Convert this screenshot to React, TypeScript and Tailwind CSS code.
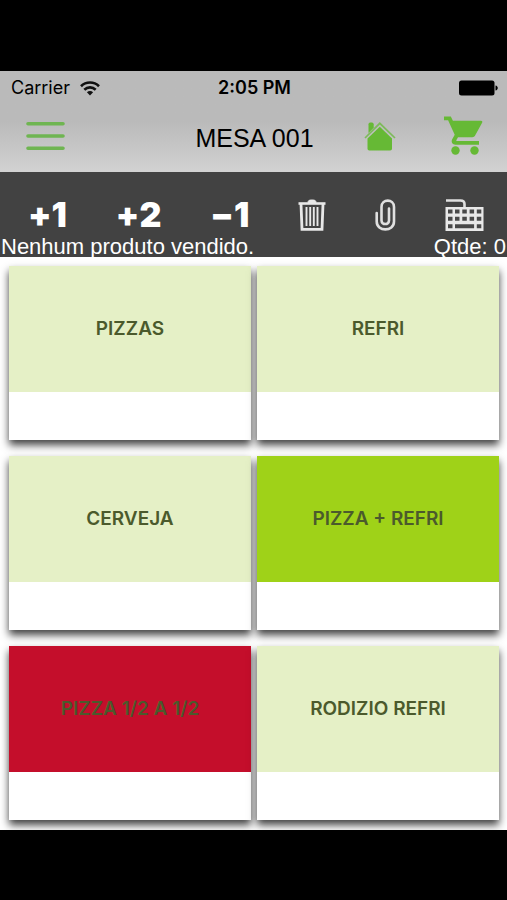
interface Category {
  name: string;
  color: string;
}

const categories: Category[] = [
  { name: "PIZZAS", color: "bg-[#e5f0c6]" },
  { name: "REFRI", color: "bg-[#e5f0c6]" },
  { name: "CERVEJA", color: "bg-[#e5f0c6]" },
  { name: "PIZZA + REFRI", color: "bg-[#9fd218]" },
  { name: "PIZZA 1/2 A 1/2", color: "bg-[#c40e2b]" },
  { name: "RODIZIO REFRI", color: "bg-[#e5f0c6]" },
];

function WifiIcon() {
  return (
    <svg width="20" height="15" viewBox="0 0 20 15" fill="none" stroke="#111" strokeWidth="2.6">
      <path d="M1 5.2C6 0.3 14 0.3 19 5.2" />
      <path d="M4.3 8.7c3.3-3.1 8.1-3.1 11.4 0" />
      <path d="M6.9 11.3c1.8-1.7 4.4-1.7 6.2 0L10 14.6z" fill="#111" stroke="none" />
    </svg>
  );
}

function BatteryIcon() {
  return (
    <svg width="39" height="16" viewBox="0 0 39 16" fill="#000">
      <rect x="0" y="0.5" width="35.5" height="15" rx="2.5" />
      <path d="M36.5 5.5c3 0.5 3 4.5 0 5z" />
    </svg>
  );
}

function MenuIcon() {
  return (
    <svg width="39" height="30" viewBox="0 0 39 30" stroke="#6fb551" strokeWidth="3.6" strokeLinecap="round">
      <path d="M2 2.7h35M2 15h35M2 27.3h35" />
    </svg>
  );
}

function HomeIcon() {
  return (
    <svg width="32" height="30" viewBox="0 0 32 30" fill="#66b935">
      <path d="M4.5 12V3.2C4.5 2 5.3 1.5 7 1.5s2.7 0.5 2.7 1.7v3.6z" />
      <path d="M1 17L15.8 2.3 31 17" fill="none" stroke="#7dbb5a" strokeWidth="1.7" />
      <path d="M3.5 17.5L15.8 5.8 28 17.5V27.5c0 1.2-0.7 1.9-1.9 1.9H5.4c-1.2 0-1.9-0.7-1.9-1.9z" />
    </svg>
  );
}

function CartIcon() {
  return (
    <svg width="39" height="39" viewBox="0 0 39 39" fill="#66b935">
      <path d="M0 0.5h6.8l2.1 4.3H37c1.1 0 1.7 0.9 1.1 2l-7 12.7c-0.6 1.1-1.5 1.7-2.8 1.7H14l-1.7 3c-0.2 0.5 0 0.8 0.5 0.8H35v3.8H11.5c-3 0-4.7-2.9-3.3-5.5l2.5-4.6L4.1 4.3H0z" />
      <circle cx="11.5" cy="34.5" r="4.2" />
      <circle cx="30.5" cy="34.5" r="4.2" />
    </svg>
  );
}

function TrashIcon() {
  return (
    <svg width="28" height="32" viewBox="0 0 28 32" fill="none" stroke="#e8e8e8">
      <path d="M0.5 4.5h27" strokeWidth="2.6" />
      <path d="M10 3.5c0-2 1-2.5 4-2.5s4 0.5 4 2.5z" fill="#e8e8e8" />
      <path d="M3 5l1 25.3h20L25 5" strokeWidth="2.8" />
      <path d="M8.5 8v19M12.2 8v19M15.8 8v19M19.5 8v19" strokeWidth="1.9" />
    </svg>
  );
}

function ClipIcon() {
  return (
    <svg width="21" height="32" viewBox="0 0 21 32" fill="none" stroke="#e0e0e0" strokeWidth="2.6" strokeLinecap="round">
      <path d="M1.7 14v8.5c0 10.5 17.3 10.5 17.3 0V8c0-8.500-12.500-8.500-12.500 0v13.500c0 4.700 7.500 4.700 7.500 0V9.500" />
    </svg>
  );
}

function KeyboardIcon() {
  return (
    <svg width="39" height="32" viewBox="0 0 39 32">
      <path d="M1 1.5h14.5c2.5 0 4 1.2 4 3.5v4" fill="none" stroke="#e0e0e0" strokeWidth="2.6" />
      <path d="M0.5 8h38v24h-38z" fill="#e8e8e8" />
      <path
        d="M3 10.5h4.5v4H3zM10 10.5h4.5v4H10zM17.3 10.5h4.5v4h-4.5zM24.6 10.5h4.5v4h-4.5zM31.8 10.5h4.5v4h-4.5zM3 17.8h4.5v4H3zM10 17.8h4.5v4H10zM17.3 17.8h4.5v4h-4.5zM24.6 17.8h4.5v4h-4.5zM31.8 17.8h4.5v4h-4.5zM3 25.3h4.5v4H3zM10 25.3h19.1v4H10zM31.8 25.3h4.5v4h-4.5z"
        fill="#484848"
      />
    </svg>
  );
}

function QuantityButton({ sign, amount }: { sign: string; amount: number }) {
  return (
    <button
      type="button"
      className="flex items-center font-[Inter,sans-serif] text-[34px] leading-none font-black"
    >
      <span>{sign}</span>
      <span>{amount}</span>
    </button>
  );
}

function CategoryCard({ name, color }: Category) {
  return (
    <button
      type="button"
      className="flex flex-col bg-white shadow-[0_5px_8px_rgba(0,0,0,0.75)]"
    >
      <span
        className={`flex h-[126px] w-full items-center justify-center text-[19px] font-semibold text-[#4b5a2c] ${color}`}
      >
        {name}
      </span>
      <span className="h-12" />
    </button>
  );
}

export default function App() {
  return (
    <div className="min-h-screen bg-black pt-[71px] font-[Inter,sans-serif]">
      <header className="bg-linear-to-b from-[#bababa] from-50% to-[#d2d2d2] text-black">
        <div className="grid h-[34px] grid-cols-[1fr_auto_1fr] items-center pr-[9px] pl-[11px] text-lg">
          <div className="flex items-center gap-2.5">
            <span>Carrier</span>
            <WifiIcon />
          </div>
          <span className="font-semibold">2:05 PM</span>
          <div className="flex justify-end">
            <BatteryIcon />
          </div>
        </div>
        <div className="grid h-[67px] grid-cols-[1fr_auto_1fr] items-center pr-6 pl-[26px]">
          <button type="button" aria-label="Menu" className="justify-self-start pb-1.5">
            <MenuIcon />
          </button>
          <h1 className="font-['Liberation_Sans',sans-serif] text-[25px]">MESA 001</h1>
          <div className="flex items-center justify-end gap-12 pb-1.5">
            <button type="button" aria-label="Início">
              <HomeIcon />
            </button>
            <button type="button" aria-label="Carrinho">
              <CartIcon />
            </button>
          </div>
        </div>
      </header>

      <section className="bg-[#424242] pt-[22px] font-['Liberation_Sans',sans-serif] text-white">
        <div className="flex h-[42px] items-center justify-between pr-[23px] pl-7">
          <QuantityButton sign="+" amount={1} />
          <QuantityButton sign="+" amount={2} />
          <QuantityButton sign="−" amount={1} />
          <button type="button" aria-label="Excluir">
            <TrashIcon />
          </button>
          <button type="button" aria-label="Anexar">
            <ClipIcon />
          </button>
          <button type="button" aria-label="Teclado">
            <KeyboardIcon />
          </button>
        </div>
        <div className="flex justify-between px-px text-[22px] leading-[21px]">
          <span>Nenhum produto vendido.</span>
          <span>Qtde: 0</span>
        </div>
      </section>

      <main className="grid grid-cols-2 gap-x-1.5 gap-y-4 overflow-hidden bg-white pt-[9px] pr-2 pb-[10px] pl-[9px]">
        {categories.map((category) => (
          <CategoryCard key={category.name} {...category} />
        ))}
      </main>
    </div>
  );
}
